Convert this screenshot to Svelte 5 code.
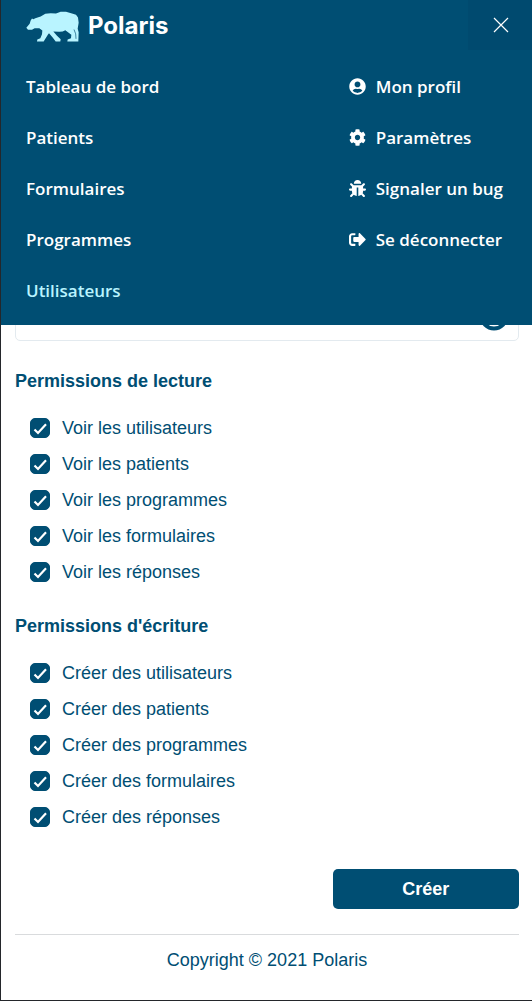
<script>
  const links = ['Tableau de bord', 'Patients', 'Formulaires', 'Programmes', 'Utilisateurs'];
  const current = 'Utilisateurs';

  const account = [
    {
      label: 'Mon profil',
      box: '0 0 496 512',
      d: 'M248 8C111 8 0 119 0 256s111 248 248 248 248-111 248-248S385 8 248 8zm0 96c48.6 0 88 39.4 88 88s-39.4 88-88 88-88-39.4-88-88 39.4-88 88-88zm0 344c-58.7 0-111.3-26.6-146.5-68.2 18.8-35.4 55.6-59.8 98.5-59.8 2.4 0 4.8.4 7.1 1.1 13 4.2 26.6 6.9 40.9 6.9 14.3 0 28-2.7 40.9-6.9 2.3-.7 4.7-1.1 7.1-1.1 42.9 0 79.7 24.4 98.5 59.8C359.3 421.4 306.7 448 248 448z'
    },
    {
      label: 'Paramètres',
      box: '0 0 512 512',
      d: 'M487.4 315.7l-42.6-24.6c4.3-23.2 4.3-47 0-70.2l42.6-24.6c4.9-2.8 7.1-8.6 5.5-14-11.1-35.6-30-67.8-54.7-94.6-3.8-4.1-10-5.1-14.8-2.3L380.8 110c-17.9-15.4-38.5-27.3-60.8-35.1V25.8c0-5.6-3.9-10.5-9.4-11.7-36.7-8.2-74.3-7.8-109.2 0-5.5 1.2-9.4 6.1-9.4 11.7V75c-22.2 7.9-42.8 19.8-60.8 35.1L88.7 85.5c-4.9-2.8-11-1.9-14.8 2.3-24.7 26.7-43.6 58.9-54.7 94.6-1.7 5.4.6 11.2 5.5 14L67.3 221c-4.3 23.2-4.3 47 0 70.2l-42.6 24.6c-4.9 2.8-7.1 8.6-5.5 14 11.1 35.6 30 67.8 54.7 94.6 3.8 4.1 10 5.1 14.8 2.3l42.6-24.6c17.9 15.4 38.5 27.3 60.8 35.1v49.2c0 5.6 3.9 10.5 9.4 11.7 36.7 8.2 74.3 7.8 109.2 0 5.5-1.2 9.4-6.1 9.4-11.7v-49.2c22.2-7.9 42.8-19.8 60.8-35.1l42.6 24.6c4.9 2.8 11 1.9 14.8-2.3 24.7-26.7 43.6-58.9 54.7-94.6 1.5-5.5-.7-11.3-5.6-14.1zM256 336c-44.1 0-80-35.9-80-80s35.9-80 80-80 80 35.9 80 80-35.9 80-80 80z'
    },
    {
      label: 'Signaler un bug',
      box: '0 0 512 512',
      d: 'M511.988 288.9c-.478 17.43-15.217 31.1-32.653 31.1H424v16c0 21.864-4.882 42.584-13.6 61.145l60.228 60.228c12.496 12.497 12.496 32.758 0 45.255-12.498 12.497-32.759 12.496-45.256 0l-54.736-54.736C345.886 467.965 314.351 480 280 480V236c0-6.627-5.373-12-12-12h-24c-6.627 0-12 5.373-12 12v244c-34.351 0-65.886-12.035-90.636-32.108l-54.736 54.736c-12.498 12.497-32.759 12.496-45.256 0-12.496-12.497-12.496-32.758 0-45.255l60.228-60.228C92.882 378.584 88 357.864 88 336v-16H32.666C15.23 320 .491 306.33.013 288.9-.484 270.816 14.028 256 32 256h56v-58.745l-46.628-46.628c-12.496-12.497-12.496-32.758 0-45.255 12.498-12.497 32.758-12.497 45.256 0L141.255 160h229.489l54.627-54.627c12.498-12.497 32.758-12.497 45.256 0 12.496 12.497 12.496 32.758 0 45.255L424 197.255V256h56c17.972 0 32.484 14.816 31.988 32.9zM257 0c-61.856 0-112 50.144-112 112h224C369 50.144 318.856 0 257 0z'
    },
    {
      label: 'Se déconnecter',
      box: '0 0 512 512',
      d: 'M497 273L329 441c-15 15-41 4.5-41-17v-96H152c-13.3 0-24-10.7-24-24v-96c0-13.3 10.7-24 24-24h136V88c0-21.4 25.9-32 41-17l168 168c9.3 9.4 9.3 24.6 0 34zM192 436v-40c0-6.6-5.4-12-12-12H96c-17.7 0-32-14.3-32-32V160c0-17.7 14.3-32 32-32h84c6.6 0 12-5.4 12-12V76c0-6.6-5.4-12-12-12H96c-53 0-96 43-96 96v192c0 53 43 96 96 96h84c6.6 0 12-5.4 12-12z'
    }
  ];

  const subjects = ['utilisateurs', 'patients', 'programmes', 'formulaires', 'réponses'];
  const groups = [
    { title: 'Permissions de lecture', verb: 'Voir les' },
    { title: "Permissions d'écriture", verb: 'Créer des' }
  ];
</script>

<div class="page">
  <header>
    <div class="bar">
      <a class="brand" href="#accueil">
        <svg class="bear" viewBox="78 29 159 92" aria-hidden="true">
          <path d="M79 79 L89 67 L92 57 L96 51 L100 53 L106 50 L122 45 L136 37 L152 35 L168 36 L182 31 L198 31 L216 36 L228 40 L234 48 L236 64 L233 82 L236 92 L235 120 L202 120 L203 114 L213 110 L214 100 L205 93 L196 86 L188 90 L178 91 L160 90 L171 103 L182 113 L181 120 L167 120 L158 108 L147 95 L144 99 L136 112 L131 120 L111 120 L112 114 L121 110 L126 98 L127 87 L118 80 L104 80 L96 85 L84 85 Z" />
          <path class="crease" d="M222 84 L227 97 L228 112" />
        </svg>
        <span>Polaris</span>
      </a>
      <button class="close" type="button" aria-label="Fermer le menu">
        <svg viewBox="0 0 16 16" aria-hidden="true"><path d="M1 1 15 15M15 1 1 15" /></svg>
      </button>
    </div>
    <nav>
      <ul>
        {#each links as link}
          <li><a href="#menu" class:current={link === current}>{link}</a></li>
        {/each}
      </ul>
      <ul>
        {#each account as item}
          <li>
            <a href="#compte">
              <svg class="icon" viewBox={item.box} aria-hidden="true"><path d={item.d} /></svg>
              {item.label}
            </a>
          </li>
        {/each}
      </ul>
    </nav>
  </header>

  <main>
    <div class="field">
      <input type="text" aria-label="Rôle" />
      <svg viewBox="0 0 30 30" aria-hidden="true"><circle cx="15" cy="15" r="12.5" /></svg>
    </div>
    <form>
      {#each groups as group}
        <fieldset>
          <legend>{group.title}</legend>
          {#each subjects as subject}
            <label><input type="checkbox" checked />{group.verb} {subject}</label>
          {/each}
        </fieldset>
      {/each}
      <button class="submit" type="button">Créer</button>
    </form>
  </main>
  <footer>Copyright © 2021 Polaris</footer>
</div>

<style>
  :global(body) {
    margin: 0;
    background: #fff;
  }
  .page {
    box-sizing: border-box;
    min-height: 100vh;
    border-left: 1px solid #24272b;
    border-bottom: 1px solid #24272b;
    color: #004e73;
    font: 18px/24px 'Liberation Sans', Arial, sans-serif;
  }
  header {
    position: relative;
    z-index: 1;
    padding-bottom: 9px;
    background: #004e73;
    color: #fff;
  }
  .bar {
    display: flex;
    justify-content: space-between;
    height: 50px;
  }
  .brand {
    display: flex;
    align-items: center;
    gap: 9px;
    padding: 2px 0 0 25px;
    color: #fff;
    font: 700 24px/30px Inter, sans-serif;
    text-decoration: none;
  }
  .bear {
    width: 53px;
    height: 31px;
    fill: #b9f4ff;
  }
  .crease {
    fill: none;
    stroke: #004e73;
    stroke-width: 2;
  }
  .close {
    display: grid;
    place-items: center;
    width: 64px;
    padding: 0 0 0 2px;
    border: 0;
    background: #004a6f;
  }
  .close svg {
    width: 16px;
    height: 16px;
    fill: none;
    stroke: #fff;
    stroke-width: 1.2;
  }
  nav {
    display: flex;
    justify-content: space-between;
    padding: 11px 29px 0 25px;
    font: 600 17px/51px 'Open Sans', sans-serif;
  }
  ul {
    margin: 0;
    padding: 0;
    list-style: none;
  }
  nav a {
    display: flex;
    align-items: center;
    gap: 10px;
    color: #fff;
    text-decoration: none;
  }
  nav a.current {
    color: #b9f4ff;
  }
  .icon {
    width: 17px;
    height: 17px;
    fill: #fff;
  }
  main {
    padding: 0 13px 0 14px;
  }
  .field {
    display: grid;
    align-items: center;
    margin-top: -30px;
  }
  .field > * {
    grid-area: 1 / 1;
  }
  .field input {
    box-sizing: border-box;
    width: 100%;
    height: 46px;
    border: 1px solid #e3eaef;
    border-radius: 5px;
    background: #fff;
  }
  .field svg {
    justify-self: end;
    width: 30px;
    height: 30px;
    margin-right: 10px;
    margin-bottom: 4px;
    fill: none;
    stroke: #004e73;
    stroke-width: 4;
  }
  form {
    display: flex;
    flex-direction: column;
    padding-top: 4px;
  }
  fieldset {
    min-width: 0;
    margin: 24px 0 0;
    padding: 0;
    border: 0;
  }
  legend {
    margin-bottom: 17px;
    padding: 0;
    font-weight: 700;
  }
  label {
    display: flex;
    align-items: center;
    gap: 12px;
    height: 36px;
    padding-left: 15px;
  }
  label input {
    appearance: none;
    width: 20px;
    height: 20px;
    margin: 0;
    border: 1px solid #004e73;
    border-radius: 5px;
  }
  label input:checked {
    background: #004e73 url("data:image/svg+xml,%3Csvg xmlns='http://www.w3.org/2000/svg' viewBox='0 0 18 18'%3E%3Cpath d='M3.5 10.5 7 14 15 5.2' fill='none' stroke='white' stroke-width='2.2'/%3E%3C/svg%3E") center / 18px no-repeat;
  }
  .submit {
    align-self: flex-end;
    width: 37%;
    height: 40px;
    margin-top: 34px;
    border: 0;
    border-radius: 5px;
    background: #004e73;
    color: #fff;
    font: 700 18px/24px 'Liberation Sans', Arial, sans-serif;
  }
  footer {
    margin: 25px 13px 0 14px;
    padding: 13px 0 28px;
    border-top: 1px solid #d9dbdd;
    text-align: center;
  }
</style>
